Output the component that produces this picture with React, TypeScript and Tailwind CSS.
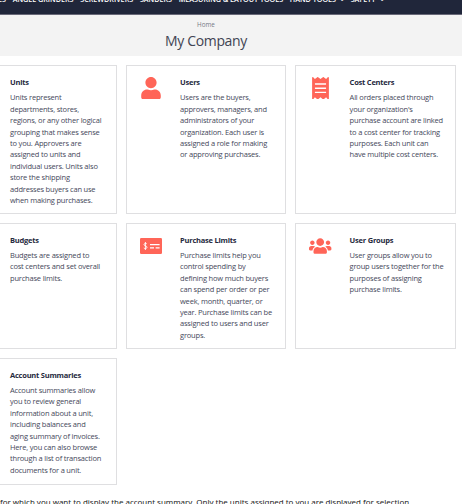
import React from "react";
import { FaUser, FaReceipt, FaUsers } from "react-icons/fa";

type CardProps = {
  title: string;
  lines: string[];
  icon?: React.ReactNode;
  tight?: boolean;
  inset?: boolean;
};

function Card({ title, lines, icon, tight = false, inset = false }: CardProps) {
  return (
    <section className="flex border border-[#dfdfe1] bg-white">
      <div
        className={
          (inset ? "w-[53.6px] pr-[4.6px]" : "w-[53px] pr-[5px]") +
          " flex shrink-0 justify-center pt-[11px] text-[#ff6558]"
        }
      >
        {icon}
      </div>
      <div className="whitespace-nowrap pt-[11px]">
        <h2 className="text-[7.5px] font-bold leading-[11.4px] tracking-[-0.22px] text-[#25293d]">{title}</h2>
        <div
          className={
            (tight ? "pt-[3.5px]" : "pt-1") + " text-[7.5px] leading-[11.4px] tracking-[-0.19px] text-[#45485a]"
          }
        >
          {lines.map((line) => (
            <p key={line}>{line}</p>
          ))}
        </div>
      </div>
    </section>
  );
}

function CheckIcon() {
  return (
    <svg viewBox="0 0 22 16" className="mt-[3px] h-4 w-[22px]">
      <rect width="22" height="16" rx="1.2" fill="#ff6558" />
      <path
        d="M6.8 5.8C6.2 5.2 4.1 5.1 4 6.6c0 1.5 3 1 3 2.7 0 1.5-2.4 1.6-3.2.7M5.4 4v8"
        fill="none"
        stroke="#fff"
        strokeWidth="0.9"
      />
      <path d="M10 6.7h9.6M10 9.9h4M15.6 9.9h4" fill="none" stroke="#fff" strokeWidth="1.2" />
    </svg>
  );
}

const nav = ["ES", "ANGLE GRINDERS", "SCREWDRIVERS", "SANDERS", "MEASURING & LAYOUT TOOLS", "HAND TOOLS", "SAFETY"];

export default function App() {
  return (
    <div className="h-[504px] w-[475px] overflow-hidden bg-white font-['Open_Sans','Noto_Sans',sans-serif]">
      <div className="w-[462px]">
        <nav className="h-[15px] overflow-hidden border-b border-[#686878] bg-[#20263a]">
          <div className="-ml-[2px] -mt-[6px] flex gap-[6.7px] whitespace-nowrap text-[7.2px] font-semibold leading-[11px] text-white">
            {nav.map((item, i) => (
              <span key={item} className="flex items-center">
                {item}
                {i > 4 && <span className="pl-1 text-[5px]">⌄</span>}
              </span>
            ))}
          </div>
        </nav>
        <header className="h-[41px] bg-[#f3f3f3] pr-[50px] text-center">
          <div className="pt-[5px] text-[6.3px] leading-[10px] text-[#777986]">Home</div>
          <h1 className="text-[14px] leading-[21px] tracking-[-0.35px] text-[#414452]">My Company</h1>
        </header>
      </div>
      <main className="-ml-[44px] mt-[9px] grid w-[500px] grid-cols-[161px_160px_161px] grid-rows-[149px_126px_127px] gap-x-[9px] gap-y-[9px]">
        <Card
          title="Units"
          lines={["Units represent", "departments, stores,", "regions, or any other logical", "grouping that makes sense", "to you. Approvers are", "assigned to units and", "individual users. Units also", "store the shipping", "addresses buyers can use", "when making purchases."]}
        />
        <Card
          title="Users"
          icon={<FaUser className="h-[22.4px] w-[20px]" />}
          lines={["Users are the buyers,", "approvers, managers, and", "administrators of your", "organization. Each user is", "assigned a role for making", "or approving purchases."]}
        />
        <Card
          inset
          title="Cost Centers"
          icon={<FaReceipt className="h-[22.4px] w-[17px]" />}
          lines={["All orders placed through", "your organization's", "purchase account are linked", "to a cost center for tracking", "purposes. Each unit can", "have multiple cost centers."]}
        />
        <Card tight title="Budgets" lines={["Budgets are assigned to", "cost centers and set overall", "purchase limits."]} />
        <Card
          tight
          title="Purchase Limits"
          icon={<CheckIcon />}
          lines={["Purchase limits help you", "control spending by", "defining how much buyers", "can spend per order or per", "week, month, quarter, or", "year. Purchase limits can be", "assigned to users and user", "groups."]}
        />
        <Card
          tight
          inset
          title="User Groups"
          icon={<FaUsers className="mt-[2px] h-[18px] w-[22.4px]" />}
          lines={["User groups allow you to", "group users together for the", "purposes of assigning", "purchase limits."]}
        />
        <Card
          tight
          title="Account Summaries"
          lines={["Account summaries allow", "you to review general", "information about a unit,", "including balances and", "aging summary of invoices.", "Here, you can also browse", "through a list of transaction", "documents for a unit."]}
        />
      </main>
      <p className="mt-[11px] whitespace-nowrap text-[7.95px] leading-[12px] text-[#222] font-['Noto_Sans',sans-serif]">
        for which you want to display the account summary. Only the units assigned to you are displayed for selection.
      </p>
    </div>
  );
}
